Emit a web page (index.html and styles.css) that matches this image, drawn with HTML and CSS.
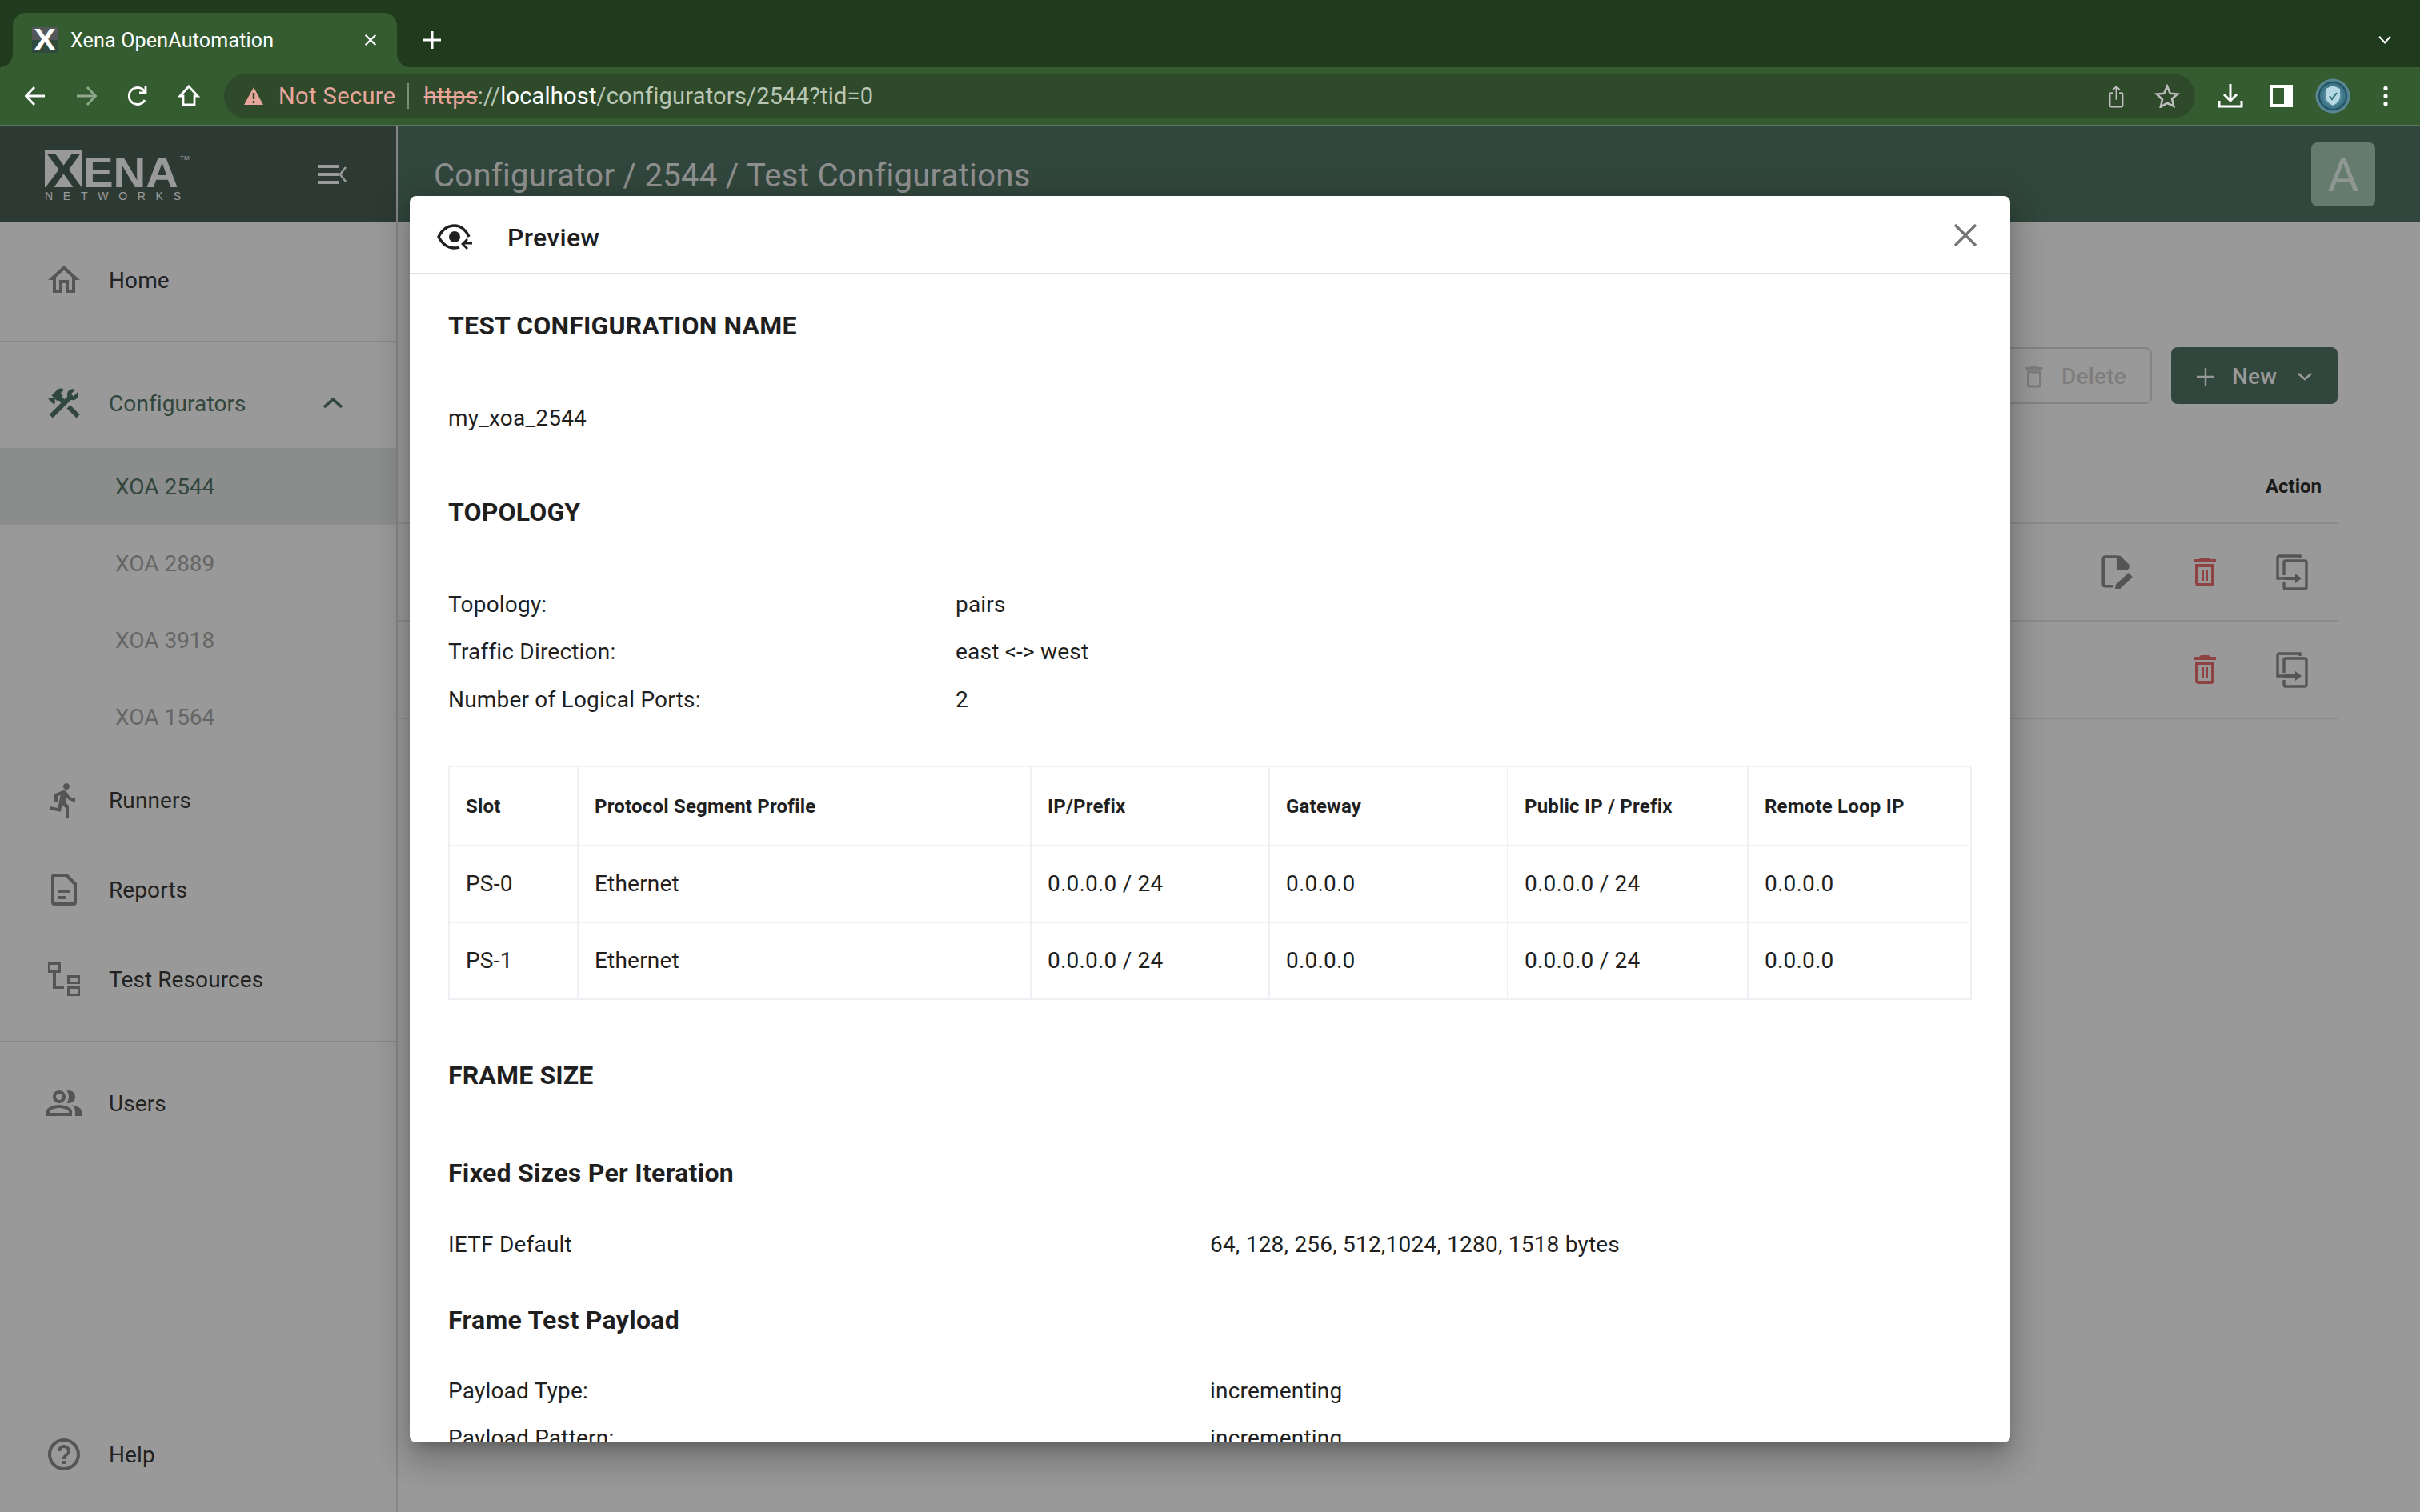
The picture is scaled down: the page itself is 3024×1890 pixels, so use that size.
FILE: index.html
```html
<!DOCTYPE html>
<html lang="en">
<head>
<meta charset="UTF-8" />
<title>Xena OpenAutomation</title>
<link rel="stylesheet" href="styles.css">
</head>
<body>

<!-- ===== BROWSER CHROME ===== -->
<div class="tabstrip">
  <div class="tab">
    <svg class="favicon" viewBox="0 0 32 32"><rect width="32" height="16" fill="#55585a"/><rect y="16" width="32" height="16" fill="#2f4a3c"/><text x="16" y="29" text-anchor="middle" font-family="Liberation Sans" font-weight="700" font-size="38" textLength="28" lengthAdjust="spacingAndGlyphs" fill="#fff">X</text></svg>
    <span class="tab-title">Xena OpenAutomation</span>
    <svg class="tab-close" viewBox="0 0 20 20"><path d="M3 3l14 14M17 3L3 17" stroke="#fff" stroke-width="2.4" fill="none"/></svg>
  </div>
  <svg class="tab-new" viewBox="0 0 24 24"><path d="M12 1v22M1 12h22" stroke="#fff" stroke-width="3" fill="none"/></svg>
  <svg class="tab-list" viewBox="0 0 20 14"><path d="M2 2l8 9 8-9" stroke="#fff" stroke-width="2.4" fill="none"/></svg>
</div>
<div class="toolbar">
  <div class="nav-icons">
    <svg viewBox="0 0 28 28"><path d="M26 14H3M13 3L2.5 14 13 25" stroke="#fff" stroke-width="2.8" fill="none"/></svg>
    <svg viewBox="0 0 28 28"><path d="M2 14h23M15 3l10.5 11L15 25" stroke="#8fa88b" stroke-width="2.8" fill="none"/></svg>
    <svg viewBox="0 0 28 28"><path d="M23 19a10.500 10.500 0 1 1 0-10M24 2v8h-8" stroke="#fff" stroke-width="2.8" fill="none"/></svg>
    <svg viewBox="0 0 28 28"><path d="M14 2L3 14h4v11h14V14h4z" stroke="#fff" stroke-width="2.8" fill="none"/></svg>
  </div>
  <div class="omnibox">
    <svg class="warn" viewBox="0 0 26 24"><path d="M13 1l12 22H1z" fill="#e8a59c"/><path d="M13 8v8M13 18v3" stroke="#2f4a2b" stroke-width="2.4"/></svg>
    <span class="not-secure">Not Secure</span>
    <span class="omni-sep"></span>
    <span class="url"><span class="url-scheme">https</span>://<span class="url-host">localhost</span>/configurators/2544?tid=0</span>
    <svg class="omni-share" viewBox="0 0 24 40"><path d="M7 14H3a2 2 0 0 0-2 2v20a2 2 0 0 0 2 2h18a2 2 0 0 0 2-2V16a2 2 0 0 0-2-2h-4M12 26V3M6 9l6-6 6 6" stroke="#bdbdbd" stroke-width="2.600" fill="none"/></svg>
    <svg class="omni-star" viewBox="0 0 32 32"><path d="M16 3l4 9.500 10 .8-7.600 6.500 2.300 9.800L16 25.400 7.300 30.600l2.300-9.800L2 13.300l10-.8z" stroke="#bdbdbd" stroke-width="2.800" fill="none"/></svg>
  </div>
  <div class="tool-icons">
    <svg class="dl" viewBox="0 0 32 32"><path d="M16 1v21M8 14l8 8 8-8M2 22v7h28v-7" stroke="#fff" stroke-width="3" fill="none"/></svg>
    <svg class="side" viewBox="0 0 28 28"><rect width="28" height="28" fill="#fff"/><rect x="3" y="4" width="14" height="20" fill="#355b30"/></svg>
    <svg class="ava" viewBox="0 0 44 44"><defs><radialGradient id="avaGrad"><stop offset="0" stop-color="#9cc7d2"/><stop offset=".65" stop-color="#3a7386"/><stop offset="1" stop-color="#5f8a96"/></radialGradient></defs><circle cx="22" cy="22" r="21.500" fill="url(#avaGrad)"/><circle cx="22" cy="22" r="17" fill="none" stroke="#1f5163" stroke-width="2"/><path d="M22 9l9 4v8c0 7-4 10-9 13-5-3-9-6-9-13v-8z" fill="#b5d8e2"/><path d="M18 22l3 4 6-8" stroke="#2f6b7e" stroke-width="2" fill="none"/></svg>
    <svg class="dots" viewBox="0 0 8 32"><circle cx="4" cy="5" r="3" fill="#fff"/><circle cx="4" cy="16" r="3" fill="#fff"/><circle cx="4" cy="27" r="3" fill="#fff"/></svg>
  </div>
</div>

<!-- ===== APP ===== -->
<div class="app">
  <aside class="sidebar">
    <div class="brand">
      <svg class="logo" viewBox="0 0 180 70">
        <rect y="4" width="47" height="47" fill="#fff"/>
        <text x="23.500" y="51" text-anchor="middle" font-family="Liberation Sans" font-weight="700" font-size="62" textLength="46" lengthAdjust="spacingAndGlyphs" fill="#4b6158">X</text>
        <text x="48" y="51" font-family="Liberation Sans" font-weight="700" font-size="54" textLength="119" lengthAdjust="spacingAndGlyphs" fill="#fff">ENA</text>
        <text x="169" y="17" font-family="Liberation Sans" font-size="8" fill="#fff">TM</text>
        <text x="0" y="67" font-family="Liberation Sans" font-size="14" textLength="170" fill="#fff">NETWORKS</text>
      </svg>
      <svg class="menu-toggle" viewBox="0 0 36 24"><path d="M0 2h26M0 12h26M0 22h26" stroke="#fff" stroke-width="4" fill="none"/><path d="M35 3l-7 9 7 9" stroke="#fff" stroke-width="2.500" fill="none"/></svg>
    </div>
    <nav class="nav">
      <div class="nav-group">
        <a class="nav-item"><svg viewBox="0 0 24 24"><path d="M12 5.690l5 4.500V18h-2v-6H9v6H7v-7.810l5-4.500M12 3L2 12h3v8h6v-6h2v6h6v-8h3L12 3z"/></svg>Home</a>
      </div>
      <div class="nav-group">
        <a class="nav-item is-open"><svg viewBox="0 0 24 24"><path d="M13.780 15.300l6 6 2.110-2.160-6-6-2.110 2.160zM17.500 10.100c-.39 0-.81-.05-1.140-.19L4.970 21.250l-2.110-2.110 7.410-7.400-1.770-1.780-.72.700-1.450-1.410v2.860l-.7.700-3.520-3.560.7-.7h2.810L4.220 7.140l3.560-3.560c1.170-1.170 3.050-1.170 4.220 0L9.890 5.740l1.410 1.400-.71.710 1.790 1.780 1.820-1.880c-.14-.33-.2-.75-.2-1.120 0-1.970 1.560-3.520 3.500-3.520.59 0 1.110.14 1.580.42L16.410 6.200l1.500 1.500 2.670-2.670c.28.470.42.970.42 1.600 0 1.920-1.550 3.470-3.500 3.470z"/></svg>Configurators<svg class="nav-chev" viewBox="0 0 24 14"><path d="M1 12L12 2l11 10" stroke="#527564" stroke-width="3.500" fill="none"/></svg></a>
        <a class="nav-sub is-active">XOA 2544</a>
        <a class="nav-sub">XOA 2889</a>
        <a class="nav-sub">XOA 3918</a>
        <a class="nav-sub">XOA 1564</a>
        <a class="nav-item"><svg viewBox="0 0 24 24"><path d="M13.490 5.480c1.100 0 2-.9 2-2s-.9-2-2-2-2 .9-2 2 .9 2 2 2zm-3.600 13.900l1-4.400 2.100 2v6h2v-7.500l-2.100-2 .6-3c1.300 1.500 3.300 2.500 5.500 2.500v-2c-1.900 0-3.500-1-4.300-2.400l-1-1.600c-.4-.6-1-1-1.700-1-.3 0-.5.1-.8.1l-5.200 2.200v4.700h2v-3.400l1.800-.7-1.600 8.100-4.900-1-.4 2 7 1.400z"/></svg>Runners</a>
        <a class="nav-item"><svg viewBox="0 0 24 24"><path fill-rule="evenodd" d="M14 2H6a2 2 0 0 0-2 2v16a2 2 0 0 0 2 2h12a2 2 0 0 0 2-2V8l-6-6zm4 18H6V4h7l5 5v11z"/><path d="M8 12h8v2H8zM8 16h5v2H8z"/></svg>Reports</a>
        <a class="nav-item"><svg viewBox="0 0 40 42" class="icon-res"><path fill-rule="evenodd" d="M0 0h16v13H0zM3 3v7h10V3zM24 16h16v11H24zM27 19v5h10v-5zM24 30h16v12H24zM27 33v6h10v-6z"/><path d="M6 13h4v16h10v4H6z"/></svg>Test Resources</a>
      </div>
      <div class="nav-group">
        <a class="nav-item"><svg viewBox="0 0 24 24"><path d="M16.670 13.130C18.040 14.060 19 15.320 19 17v3h4v-3c0-2.180-3.570-3.470-6.330-3.870zM15 12c2.210 0 4-1.790 4-4s-1.790-4-4-4c-.47 0-.91.1-1.330.24C14.500 5.270 15 6.580 15 8s-.5 2.730-1.330 3.760c.42.14.86.24 1.330.24zM9 12c2.210 0 4-1.790 4-4s-1.790-4-4-4-4 1.790-4 4 1.790 4 4 4zm0-6c1.100 0 2 .9 2 2s-.9 2-2 2-2-.9-2-2 .9-2 2-2zM9 13c-2.670 0-8 1.340-8 4v3h16v-3c0-2.660-5.330-4-8-4zm6 5H3v-.99C3.200 16.290 6.300 15 9 15s5.800 1.290 6 2v1z"/></svg>Users</a>
      </div>
      <div class="nav-bottom">
        <a class="nav-item"><svg viewBox="0 0 24 24"><path d="M11 18h2v-2h-2v2zm1-16C6.480 2 2 6.480 2 12s4.480 10 10 10 10-4.480 10-10S17.520 2 12 2zm0 18c-4.410 0-8-3.590-8-8s3.590-8 8-8 8 3.590 8 8-3.590 8-8 8zm0-14c-2.210 0-4 1.790-4 4h2c0-1.100.9-2 2-2s2 .9 2 2c0 2-3 1.750-3 5h2c0-2.250 3-2.500 3-5 0-2.210-1.790-4-4-4z"/></svg>Help</a>
      </div>
    </nav>
  </aside>

  <main class="main">
    <header class="topbar">
      <h1 class="crumbs">Configurator / 2544 / Test Configurations</h1>
      <div class="user-badge">A</div>
    </header>
    <div class="page">
      <div class="actions">
        <button class="btn btn-outline"><svg viewBox="0 0 24 24"><path d="M6 19c0 1.100.9 2 2 2h8c1.100 0 2-.9 2-2V7H6v12zM8 9h8v10H8V9zm7.500-5l-1-1h-5l-1 1H5v2h14V4z"/></svg>Delete</button>
        <button class="btn btn-primary"><svg class="btn-plus" viewBox="0 0 22 22"><path d="M11 0v22M0 11h22" stroke="#fff" stroke-width="2.400" fill="none"/></svg>New<svg class="btn-chev" viewBox="0 0 18 10"><path d="M1 1l8 7 8-7" stroke="#fff" stroke-width="2.600" fill="none"/></svg></button>
      </div>
      <div class="list-head">Action</div>
      <div class="list-row">
        <svg class="act" viewBox="0 0 38 42"><path d="M14 38H4a2 2 0 0 1-2-2V5a2 2 0 0 1 2-2h14" stroke="#8e8e8e" stroke-width="3.400" fill="none"/><path d="M18 1.500h4l11 11v4l-3 2H18z" fill="#8e8e8e"/><path d="M16 41l1-5 15-14 5 5-15 14z" fill="#8e8e8e"/></svg>
        <svg class="act act-del" viewBox="0 0 24 24"><path d="M6 19c0 1.100.9 2 2 2h8c1.100 0 2-.9 2-2V7H6v12zM8 9h8v10H8V9zm7.500-5l-1-1h-5l-1 1H5v2h14V4z"/><path d="M10 10.500h1.500v7H10zM12.500 10.500H14v7h-1.500z"/></svg>
        <svg class="act act-copy" viewBox="0 0 40 46"><path d="M30 6V3H4a2 2 0 0 0-2 2v26h8" stroke="#8e8e8e" stroke-width="3.400" fill="none"/><path d="M10 36v6a2 2 0 0 0 2 2h24a2 2 0 0 0 2-2V11a2 2 0 0 0-2-2H12a2 2 0 0 0-2 2v16" stroke="#8e8e8e" stroke-width="3.400" fill="none"/><path d="M10 29h14v-4l8 6-8 6v-4H10z" fill="#8e8e8e"/></svg>
      </div>
      <div class="list-row">
        <svg class="act act-del" viewBox="0 0 24 24"><path d="M6 19c0 1.100.9 2 2 2h8c1.100 0 2-.9 2-2V7H6v12zM8 9h8v10H8V9zm7.500-5l-1-1h-5l-1 1H5v2h14V4z"/><path d="M10 10.500h1.500v7H10zM12.500 10.500H14v7h-1.500z"/></svg>
        <svg class="act act-copy" viewBox="0 0 40 46"><path d="M30 6V3H4a2 2 0 0 0-2 2v26h8" stroke="#8e8e8e" stroke-width="3.400" fill="none"/><path d="M10 36v6a2 2 0 0 0 2 2h24a2 2 0 0 0 2-2V11a2 2 0 0 0-2-2H12a2 2 0 0 0-2 2v16" stroke="#8e8e8e" stroke-width="3.400" fill="none"/><path d="M10 29h14v-4l8 6-8 6v-4H10z" fill="#8e8e8e"/></svg>
      </div>
    </div>
  </main>

  <!-- ===== PREVIEW DIALOG ===== -->
  <div class="backdrop">
    <section class="dialog">
      <div class="dialog-head">
        <svg class="preview-icon" viewBox="0 0 44 34"><path d="M40 16C36 7 29 2 22 2 13 2 6 8 2 16c4 8 11 14 20 14 2 0 4-.3 6-1" stroke="#1f1f1f" stroke-width="3.400" fill="none"/><circle cx="22" cy="16" r="7" fill="#1f1f1f"/><path d="M44 24H34M38 19l-6 6 6 6" stroke="#1f1f1f" stroke-width="2.800" fill="none"/></svg>
        <span class="dialog-title">Preview</span>
        <svg class="dialog-close" viewBox="0 0 28 28"><path d="M1 1l26 26M27 1L1 27" stroke="#757575" stroke-width="3.400" fill="none"/></svg>
      </div>
      <div class="dialog-body">
        <h2 class="sec sec-first">TEST CONFIGURATION NAME</h2>
        <p class="plain">my_xoa_2544</p>
        <h2 class="sec sec-top">TOPOLOGY</h2>
        <div class="kv"><span>Topology:</span><span>pairs</span></div>
        <div class="kv"><span>Traffic Direction:</span><span>east &lt;-&gt; west</span></div>
        <div class="kv"><span>Number of Logical Ports:</span><span>2</span></div>

        <table class="ports">
          <colgroup><col class="c-slot"><col class="c-proto"><col class="c-ip"><col class="c-gw"><col class="c-pub"><col class="c-loop"></colgroup>
          <thead>
            <tr><th>Slot</th><th>Protocol Segment Profile</th><th>IP/Prefix</th><th>Gateway</th><th>Public IP / Prefix</th><th>Remote Loop IP</th></tr>
          </thead>
          <tbody>
            <tr><td>PS-0</td><td>Ethernet</td><td>0.0.0.0 / 24</td><td>0.0.0.0</td><td>0.0.0.0 / 24</td><td>0.0.0.0</td></tr>
            <tr><td>PS-1</td><td>Ethernet</td><td>0.0.0.0 / 24</td><td>0.0.0.0</td><td>0.0.0.0 / 24</td><td>0.0.0.0</td></tr>
          </tbody>
        </table>

        <h2 class="sec sec-frame">FRAME SIZE</h2>
        <h3 class="sub sub-fixed">Fixed Sizes Per Iteration</h3>
        <div class="kv kv-wide"><span>IETF Default</span><span>64, 128, 256, 512,1024, 1280, 1518 bytes</span></div>
        <h3 class="sub sub-payload">Frame Test Payload</h3>
        <div class="kv kv-wide"><span>Payload Type:</span><span>incrementing</span></div>
        <div class="kv kv-wide"><span>Payload Pattern:</span><span>incrementing</span></div>
      </div>
    </section>
  </div>
</div>

</body>
</html>
```

FILE: styles.css
```css
:root{
  --brand:#527564;
  --brand-dark:#4b6158;
  --strip:#203a1e;
  --tool:#355b30;
  --omni:#2f4a2b;
  --ink:#1f1f1f;
  --line:#f0f0f4;
  --ui-font:Roboto,"Liberation Sans",sans-serif;
}
*{box-sizing:border-box;}
html,body{height:100%;}
body{
  margin:0;width:3024px;height:1890px;overflow:hidden;
  display:flex;flex-direction:column;
  font-family:var(--ui-font);color:var(--ink);background:#fff;
}

/* browser chrome */
.tabstrip{
  height:84px;background:var(--strip);
  display:flex;align-items:flex-end;padding-left:16px;flex:none;
}
.tab{
  position:relative;width:480px;height:68px;background:var(--tool);
  border-radius:16px 16px 0 0;
  display:flex;align-items:center;padding:0 24px;color:#fff;
}
.tab::before,.tab::after{
  content:"";position:absolute;bottom:0;width:16px;height:16px;
}
.tab::before{left:-16px;background:radial-gradient(circle at 0 0,var(--strip) 15.500px,var(--tool) 16px);}
.tab::after{right:-16px;background:radial-gradient(circle at 100% 0,var(--strip) 15.500px,var(--tool) 16px);}
.favicon{width:32px;height:32px;flex:none;margin-right:16px;overflow:visible;}
.tab-title{font-size:25px;letter-spacing:.2px;flex:1;white-space:nowrap;}
.tab-close{width:18px;height:18px;}
.tab-new{width:24px;height:24px;margin:0 0 22px 32px;}
.tab-list{width:18px;height:12px;margin:0 35px 28px auto;}

.toolbar{
  height:74px;background:var(--tool);border-bottom:2px solid #5a7a55;
  display:flex;align-items:flex-start;padding-top:8px;flex:none;
}
.nav-icons{display:flex;width:280px;padding:14px 0 0 30px;gap:36px;}
.nav-icons svg{width:28px;height:28px;}
.omnibox{
  width:2463px;height:56px;background:var(--omni);border-radius:28px;
  display:flex;align-items:center;padding-left:24px;
}
.warn{width:26px;height:24px;margin-right:18px;}
.not-secure{font-size:29px;letter-spacing:.4px;color:#e8a59c;}
.omni-sep{width:2px;height:32px;background:#7c8f78;margin:0 19px 0 14px;}
.url{font-size:29px;letter-spacing:.2px;color:#b9c6b6;flex:1;}
.url-scheme{color:#e8a59c;text-decoration:line-through;}
.url-host{color:#fff;}
.omni-share{width:23px;height:29px;margin-right:36px;}
.omni-star{width:32px;height:30px;margin-right:19px;}
.tool-icons{display:flex;align-items:center;height:56px;flex:1;position:relative;padding-left:28px;}
.dl{width:32px;height:32px;margin-right:34px;}
.side{width:28px;height:28px;margin-right:28px;}
.ava{width:44px;height:44px;margin-right:40px;}
.dots{width:8px;height:28px;}

/* app shell */
.app{position:relative;flex:1;display:flex;min-height:0;}
.sidebar{
  width:497px;flex:none;display:flex;flex-direction:column;
  border-right:2px solid #dfdfdf;
}
.brand{
  height:120px;background:var(--brand-dark);flex:none;
  display:flex;align-items:center;padding:0 62px 0 56px;justify-content:space-between;
}
.logo{width:180px;height:70px;overflow:visible;}
.menu-toggle{width:36px;height:24px;}
.nav{flex:1;display:flex;flex-direction:column;}
.nav-group{padding:20px 0;border-bottom:2px solid #dfdfdf;}
.nav-group:first-child{padding-top:16px;}
.nav-group:nth-child(3){border-bottom:0;}
.nav-bottom{margin-top:auto;padding-bottom:16px;}
.nav-item{
  height:112px;display:flex;align-items:center;padding-left:60px;
  font-size:28px;letter-spacing:.1px;color:#393939;
}
.nav-item svg:first-child{width:48px;height:48px;margin:0 32px 0 -4px;fill:#8e8e8e;flex:none;}
.nav-item svg.icon-res{width:40px;height:42px;margin:0 36px 0 0;}
.nav-item.is-open{color:var(--brand);}
.nav-item.is-open svg:first-child{fill:var(--brand);}
.nav-chev{width:24px;height:14px;margin-left:auto;margin-right:67px;}
.nav-sub{
  height:96px;display:flex;align-items:center;padding-left:144px;
  font-size:28px;color:#ababab;
}
.nav-sub.is-active{background:#e6ebe8;color:var(--brand);}
.nav-group:nth-child(2){padding-bottom:21px;}

.main{flex:1;min-width:0;display:flex;flex-direction:column;}
.topbar{
  height:120px;background:var(--brand);flex:none;
  display:flex;align-items:center;justify-content:space-between;padding:0 56px 0 45px;
}
.crumbs{margin:2px 0 0;font-size:40px;font-weight:400;letter-spacing:.3px;color:#eee;}
.user-badge{
  width:80px;height:80px;border-radius:8px;background:#a8cdb6;color:#eefaf5;
  font-size:60px;display:flex;align-items:center;justify-content:center;
}

/* page behind the dialog */
.page{padding:156px 103px 0 0;}
.actions{display:flex;justify-content:flex-end;gap:24px;}
.btn{
  height:71px;border-radius:8px;font:500 28px var(--ui-font);letter-spacing:.2px;
  display:flex;align-items:center;border:0;padding:2px 0 0;
}
.btn-outline{width:500px;background:#fff;border:2px solid #dcdcdc;color:#d0d0d0;justify-content:flex-end;padding-right:30px;}
.btn-outline svg{width:36px;height:36px;fill:#d0d0d0;margin-right:16px;}
.btn-primary{width:208px;background:var(--brand);color:#fff;padding-left:32px;}
.btn-plus{width:22px;height:22px;margin-right:22px;}
.btn-chev{width:18px;height:10px;margin-left:26px;}
.list-head{
  height:150px;display:flex;align-items:flex-end;justify-content:flex-end;
  padding:0 20px 29px 0;font-size:24px;font-weight:700;line-height:32px;
  border-bottom:2px solid #e8e8e8;color:#2e2e2e;
}
.list-row{
  height:122px;display:flex;align-items:center;justify-content:flex-end;
  gap:61px;padding-right:33px;border-bottom:2px solid #e8e8e8;
}
.act{width:48px;height:44px;}
.act-del{fill:#ef6f6f;height:54px;}
.act-copy{height:46px;padding:0 4px;}

/* dialog */
.backdrop{
  position:absolute;inset:0;background:rgba(0,0,0,.4);
  display:flex;justify-content:center;align-items:center;
}
.dialog{
  width:2000px;height:1558px;background:#fff;border-radius:8px;overflow:hidden;
  display:flex;flex-direction:column;
  box-shadow:0 11px 15px -7px rgba(0,0,0,.2),0 24px 38px 3px rgba(0,0,0,.14),0 9px 46px 8px rgba(0,0,0,.12);
}
.dialog-head{
  height:98px;flex:none;border-bottom:2px solid #e0e0e0;
  display:flex;align-items:center;padding:8px 42px 0 34px;
}
.preview-icon{width:44px;height:34px;margin-right:44px;}
.dialog-title{font-size:32px;font-weight:500;letter-spacing:.3px;flex:1;}
.dialog-close{width:28px;height:28px;margin-bottom:6px;}
.dialog-body{flex:1;overflow:hidden;padding:1px 48px 0;font-size:28px;letter-spacing:.2px;}

.sec{margin:0;font-size:32px;line-height:40px;font-weight:700;letter-spacing:.15px;}
.sec-first{margin-top:43px;}
.sec-top{margin-top:81px;margin-bottom:66px;}
.sec-frame{margin-top:74px;}
.plain{margin:80px 0 0;line-height:32px;}
.sub{margin:0;font-size:32px;line-height:40px;font-weight:700;letter-spacing:.3px;}
.sub-fixed{margin:82px 0 41px;}
.sub-payload{margin:44px 0 39px;}
.kv{display:grid;grid-template-columns:634px 1fr;height:59.500px;align-items:center;line-height:32px;}
.kv-wide{grid-template-columns:952px 1fr;}

.ports{
  width:1902px;margin-top:52px;table-layout:fixed;border-collapse:collapse;
  border:2px solid var(--line);
}
.ports th,.ports td{border:2px solid var(--line);padding:0 20px;text-align:left;}
.ports th{height:99px;padding-top:2px;font-size:24px;font-weight:700;letter-spacing:.2px;}
.ports td{height:96px;}
.c-slot{width:161px;}
.c-proto{width:566px;}
.c-ip{width:298px;}
.c-gw{width:298px;}
.c-pub{width:300px;}
.c-loop{width:279px;}
```
